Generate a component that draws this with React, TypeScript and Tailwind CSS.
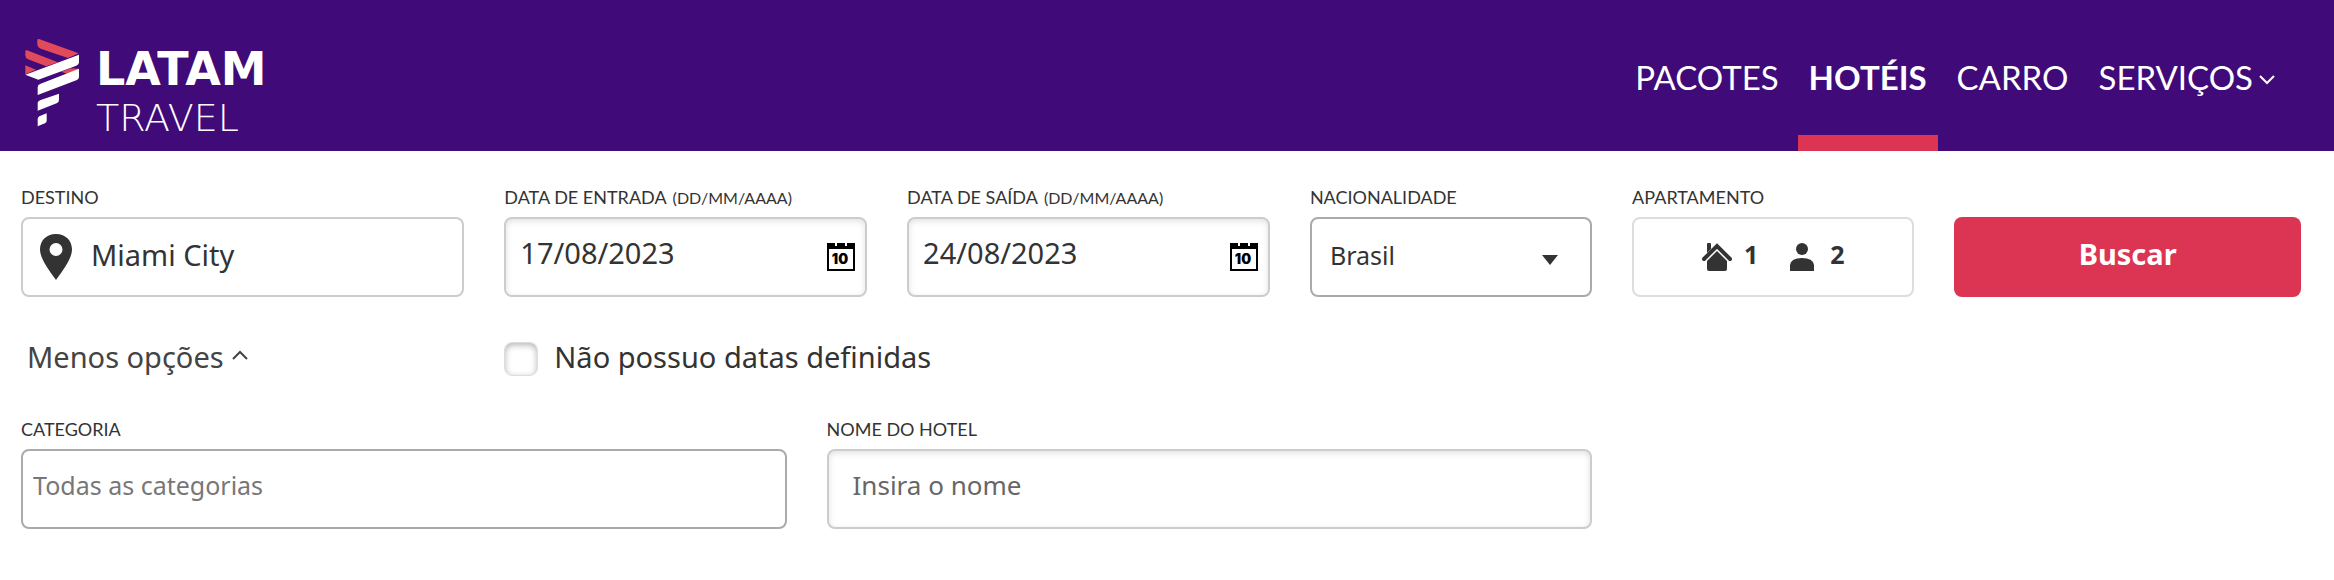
import { useState } from 'react'

const labelClass = 'block h-7 mb-1.5 text-lg leading-7 whitespace-nowrap text-[#333] font-[Lato,sans-serif]'
const boxClass = 'w-full h-20 rounded-lg border-2 bg-white text-[#333]'

const navItems = [
  { name: 'PACOTES', active: false, menu: false },
  { name: 'HOTÉIS', active: true, menu: false },
  { name: 'CARRO', active: false, menu: false },
  { name: 'SERVIÇOS', active: false, menu: true },
]

function Logo() {
  return (
    <a href="#" aria-label="LATAM Travel" className="flex items-start gap-4 text-white">
      <svg width="56" height="90" viewBox="74 58 168 270">
        <g fill="#e04a5a">
          <path d="M114 64 Q114 60 119 61 L238 104 L206 118 L124 90 Q114 85 114 76 Z" />
          <path d="M78 98 Q78 94 83 95 L176 131 L141 143 L86 122 Q78 119 78 110 Z" />
          <path d="M78 140 L110 153 L78 167 Z" />
          <path d="M186 159 L214 149 L238 150 L214 170 Z" />
        </g>
        <g fill="#fff">
          <path d="M239 108 V131 Q239 138 231 141 L117 183 L78 168 Z" />
          <path d="M239 150 V175 Q239 182 231 185 L115 229 V206 Q115 199 122 196 Z" />
          <path d="M179 225 V244 Q179 251 172 254 L115 276 V253 Q115 248 122 245 Z" />
          <path d="M142 284 V306 Q142 311 137 314 L115 323 V302 Q115 296 120 293 Z" />
        </g>
      </svg>
      <span className="flex flex-col pt-1">
        <span className="text-[46px] leading-[54px] font-bold font-['DejaVu_Sans',sans-serif]">LATAM</span>
        <span className="text-[38px] leading-[44px] font-extralight font-['DejaVu_Sans',sans-serif]">TRAVEL</span>
      </span>
    </a>
  )
}

function CalendarIcon() {
  return (
    <svg width="28" height="28" viewBox="0 0 28 28">
      <path d="M0 0 H8 V3 H10 V0 H18 V3 H20 V0 H28 V28 H0 Z M2 6 V26 H26 V6 Z" fill="#000" fillRule="evenodd" />
      <text x="13" y="21" textAnchor="middle" className="text-sm font-black font-[Inter,sans-serif]">10</text>
    </svg>
  )
}

function DateField({ id, label, initial }: { id: string; label: string; initial: string }) {
  const [value, setValue] = useState(initial)

  return (
    <div className="col-span-5">
      <label htmlFor={id} className={labelClass}>
        {label} <span className="ml-0.5 text-base">(DD/MM/AAAA)</span>
      </label>
      <div className={`${boxClass} flex items-center pl-3.5 pr-2.5 border-[#ccc] shadow-[inset_0_2px_6px_rgba(0,0,0,0.12)]`}>
        <input
          id={id}
          value={value}
          onChange={(e) => setValue(e.target.value)}
          className="flex-1 min-w-0 pb-2 text-[29px] outline-none"
        />
        <button type="button" aria-label={`Calendário: ${label}`}>
          <CalendarIcon />
        </button>
      </div>
    </div>
  )
}

export default function App() {
  const [destino, setDestino] = useState('Miami City')
  const [semDatas, setSemDatas] = useState(false)

  return (
    <div className="min-h-screen bg-white text-[#333] font-['Noto_Sans',sans-serif]">
      <header className="flex justify-between h-[151px] pl-6 pr-12 bg-[#400a78]">
        <div className="pt-[38px]">
          <Logo />
        </div>
        <nav className="flex gap-2 text-[33px] text-white font-[Lato,sans-serif]">
          {navItems.map((item) => (
            <a
              key={item.name}
              href="#"
              className={`flex items-center gap-1.5 px-[11px] border-b-16 ${
                item.active ? 'font-bold border-[#db3553]' : 'border-transparent'
              }`}
            >
              <span className="pt-5">{item.name}</span>
              {item.menu && (
                <svg width="16" height="10" viewBox="0 0 16 10" className="mt-6" fill="none" stroke="currentColor" strokeWidth="2">
                  <path d="M1 1 L8 8 L15 1" />
                </svg>
              )}
            </a>
          ))}
        </nav>
      </header>

      <form className="pt-8 pl-[21px] pr-[33px]" onSubmit={(e) => e.preventDefault()}>
        <div className="grid grid-cols-6 gap-10 items-start">
          <div className="col-span-5 grid grid-cols-24 gap-x-10">
            <div className="col-span-6">
              <label htmlFor="destino" className={labelClass}>DESTINO</label>
              <div className={`${boxClass} flex items-center gap-4.5 pl-4 border-[#ccc]`}>
                <svg width="34" height="46" viewBox="0 0 34 46" className="shrink-0">
                  <path
                    d="M17 0 C7 0 1 7 1 15.500 C1 24 9 35 17 46 C25 35 33 24 33 15.500 C33 7 27 0 17 0 Z M17 9 A6.500 6.500 0 1 1 17 22 A6.500 6.500 0 1 1 17 9 Z"
                    fill="#333"
                    fillRule="evenodd"
                  />
                </svg>
                <input
                  id="destino"
                  value={destino}
                  onChange={(e) => setDestino(e.target.value)}
                  className="flex-1 min-w-0 pb-1 text-[29px] outline-none"
                />
              </div>
            </div>

            <DateField id="entrada" label="DATA DE ENTRADA" initial="17/08/2023" />
            <DateField id="saida" label="DATA DE SAÍDA" initial="24/08/2023" />

            <div className="col-span-4">
              <label htmlFor="nacionalidade" className={labelClass}>NACIONALIDADE</label>
              <div className="relative">
                <select id="nacionalidade" className={`${boxClass} appearance-none pl-4.5 pb-0.5 text-[25px] border-[#aaa]`}>
                  <option>Brasil</option>
                </select>
                <svg width="16" height="10" viewBox="0 0 16 10" className="absolute right-[34px] top-[38px] pointer-events-none">
                  <path d="M0 0 H16 L8 10 Z" fill="#333" />
                </svg>
              </div>
            </div>

            <div className="col-span-4">
              <label htmlFor="apartamento" className={labelClass}>APARTAMENTO</label>
              <button
                id="apartamento"
                type="button"
                className={`${boxClass} flex items-center justify-center gap-8 text-[25px] font-bold border-[#ddd]`}
              >
                <span className="flex items-center gap-3">
                  <svg width="30" height="28" viewBox="0 0 30 28">
                    <path d="M2 16 L15 3 L28 16" fill="none" stroke="#333" strokeWidth="4" strokeLinecap="round" />
                    <path d="M5 1 Q5 0 6 0 H8 Q9 0 9 1 V6 L5 10 Z" fill="#333" />
                    <path d="M15 8 L25 18 V26 Q25 28 23 28 H7 Q5 28 5 26 V18 Z" fill="#333" />
                  </svg>
                  <span className="pb-1">1</span>
                </span>
                <span className="flex items-center gap-4">
                  <svg width="24" height="28" viewBox="0 0 24 28" fill="#333">
                    <ellipse cx="12" cy="6" rx="6" ry="6" />
                    <path d="M0 28 V22 Q1 15 12 15 Q23 15 24 22 V28 Z" />
                  </svg>
                  <span className="pb-1">2</span>
                </span>
              </button>
            </div>
          </div>

          <button type="submit" className="h-20 mt-[34px] pb-1.5 rounded-lg bg-[#db3553] text-[29px] font-bold text-white">
            Buscar
          </button>
        </div>

        {/* Opções */}
        <div className="grid grid-cols-6 gap-10 mt-11">
          <div className="col-span-5 grid grid-cols-24 gap-x-10 h-[34px] items-center">
            <button type="button" className="col-span-6 flex items-center gap-2 pl-1.5 text-[29px] leading-8 text-[#444]">
              <span className="pb-1">Menos opções</span>
              <svg width="16" height="10" viewBox="0 0 16 10" className="mb-2" fill="none" stroke="currentColor" strokeWidth="2">
                <path d="M1 9 L8 2 L15 9" />
              </svg>
            </button>
            <label className="col-span-10 flex items-center gap-4 text-[29px] leading-8">
              <input
                type="checkbox"
                checked={semDatas}
                onChange={(e) => setSemDatas(e.target.checked)}
                className="appearance-none w-[34px] h-[34px] rounded-lg border border-[#ddd] shadow-[inset_0_2px_6px_rgba(0,0,0,0.3)] checked:bg-[#db3553]"
              />
              <span className="pb-1">Não possuo datas definidas</span>
            </label>
          </div>
        </div>

        <div className="grid grid-cols-6 gap-10 mt-10">
          <div className="col-span-5 grid grid-cols-24 gap-x-10">
            <div className="col-span-10">
              <label htmlFor="categoria" className={labelClass}>CATEGORIA</label>
              <input
                id="categoria"
                placeholder="Todas as categorias"
                className={`${boxClass} pl-2.5 pb-2 text-[25px] border-[#aaa] placeholder:text-[#777]`}
              />
            </div>
            <div className="col-span-10">
              <label htmlFor="hotel" className={labelClass}>NOME DO HOTEL</label>
              <input
                id="hotel"
                placeholder="Insira o nome"
                className={`${boxClass} pl-6 pb-2 text-[26px] border-[#ccc] shadow-[inset_0_2px_6px_rgba(0,0,0,0.12)] placeholder:text-[#666]`}
              />
            </div>
          </div>
        </div>
      </form>
    </div>
  )
}
